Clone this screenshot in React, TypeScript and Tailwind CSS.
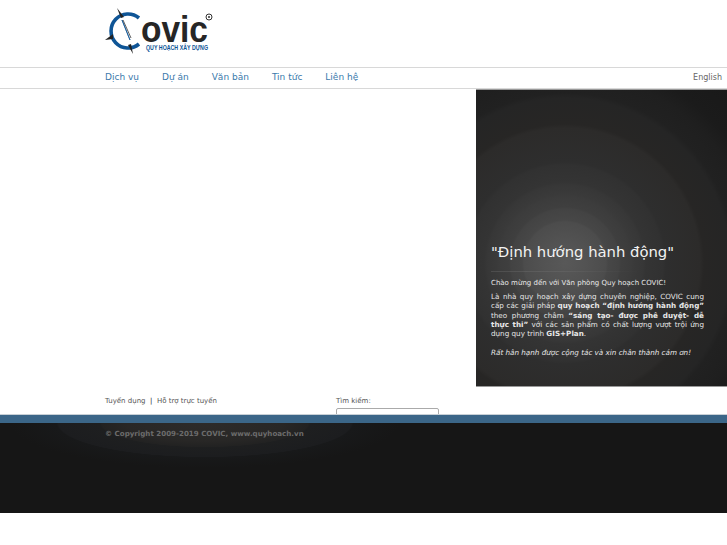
const navItems = ["Dịch vụ", "Dự án", "Văn bản", "Tin tức", "Liên hệ"];

function Logo() {
  return (
    <svg width="120" height="50" viewBox="0 0 120 50" className="block">
      <path d="M34 10 A17 17 0 1 0 34 36" fill="none" stroke="#0f5596" strokeWidth="3.6" />
      <path d="M0 32 L8 26 L8 31 Z" fill="#222" />
      <path d="M12 0 L19 9 L16 10 Z" fill="#222" />
      <path d="M28 46 L23 37 L26 36 Z" fill="#222" />
      <path d="M17 12 L25 32 L21 22 Z" fill="#0f5596" stroke="#0f5596" strokeWidth="0.8" />
      <path d="M18 12 L26 30" stroke="#333" strokeWidth="0.8" />
      <text x="36" y="34" fontFamily="'Liberation Sans', sans-serif" fontWeight="700" fontSize="37" fill="#262626" textLength="67" lengthAdjust="spacingAndGlyphs">ovic</text>
      <text x="41" y="42" fontFamily="'Liberation Sans', sans-serif" fontWeight="700" fontSize="6.6" fill="#0f5596" textLength="62" lengthAdjust="spacingAndGlyphs">QUY HOẠCH XÂY DỰNG</text>
      <circle cx="104" cy="9" r="3" fill="none" stroke="#333" strokeWidth="1" />
      <circle cx="104" cy="9" r="1" fill="#333" />
    </svg>
  );
}

export default function App() {
  return (
    <div className="h-[545px] w-[727px] overflow-hidden bg-white font-['DejaVu_Sans',sans-serif]">
      <header className="h-[67px] pl-[105px] pt-[8px]">
        <Logo />
      </header>

      <nav className="flex h-[22px] items-center border-y border-[#d8d8d8] pl-[105px] pr-[5px]">
        <div className="flex flex-1 gap-[23px] text-[9px] text-[#3a79ab]">
          {navItems.map((item) => (
            <a key={item} className="whitespace-nowrap">
              {item}
            </a>
          ))}
        </div>
        <a className="text-[8px] text-[#666]">English</a>
      </nav>

      <main className="flex h-[298px] justify-end">
        <section className="h-[298px] w-[251px] border-y border-[#999] bg-[radial-gradient(circle_at_89px_173px,#585858_0px,#535353_20px,#4c4c4c_41px,#474747_43px,#434343_54px,#3f3f3f_56px,#3c3c3c_66px,#3a3a3a_69px,#373737_78px,#343434_81px,#313131_98px,#2e2e2e_101px,#2c2b2a_135px,#272625_139px,#252525_165px,#212121_170px,#1f1f1f_190px,#1b1b1b_205px,#161616_290px)] pl-[15px] pr-[23px] pt-[151px] text-[#e8e8e8]">
          <h1 className="text-[14.8px] leading-[22px] font-normal whitespace-nowrap text-[#f2f2f2]">"Định hướng hành động"</h1>
          <div className="mt-[8px] h-px w-[150px] bg-gradient-to-r from-white/10 to-transparent" />
          <p className="mt-[6px] text-[7px] leading-[11px]">Chào mừng đến với Văn phòng Quy hoạch COVIC!</p>
          <p className="mt-[3px] text-justify text-[7.2px] leading-[9.3px] [text-align-last:justify]">
            Là nhà quy hoạch xây dựng chuyên nghiệp, COVIC cung<br />
            cấp các giải pháp <b>quy hoạch “định hướng hành động”</b><br />
            theo phương châm <b>“sáng tạo- được phê duyệt- dễ</b><br />
            <b>thực thi”</b> với các sản phẩm có chất lượng vượt trội ứng
          </p>
          <p className="text-[7.2px] leading-[9.3px]">
            dụng quy trình <b>GIS+Plan</b>.
          </p>
          <p className="mt-[9px] text-[7.2px] leading-[11px] italic">Rất hân hạnh được cộng tác và xin chân thành cám ơn!</p>
        </section>
      </main>

      <div className="flex h-[27px] overflow-hidden pl-[105px] pt-[9px] text-[7px] text-[#555]">
        <div className="flex w-[231px] gap-[4.5px]">
          <a>Tuyển dụng</a>
          <span className="text-[#222]">|</span>
          <a>Hỗ trợ trực tuyến</a>
        </div>
        <div>
          <label className="block leading-[10px]">Tìm kiếm:</label>
          <input className="mt-[2px] block h-[20px] w-[103px] rounded-[2px] border border-[#aaa] bg-white" />
        </div>
      </div>

      <div className="h-[9px] border-t border-[#c8d0d6] bg-[#3b6688]" />

      <footer className="h-[90px] bg-[#161616] bg-[radial-gradient(ellipse_195px_45px_at_205px_0px,#2d2b2a_0%,#282726_40%,#222222_53%,#1e1f20_54%,#1c1d1f_75%,#18191a_76%,#161616_100%)] pl-[105px] pt-[5px] text-[7.1px] leading-[12px] font-bold text-[#6c6c6c]">
        © Copyright 2009-2019 COVIC, www.quyhoach.vn
      </footer>
    </div>
  );
}
